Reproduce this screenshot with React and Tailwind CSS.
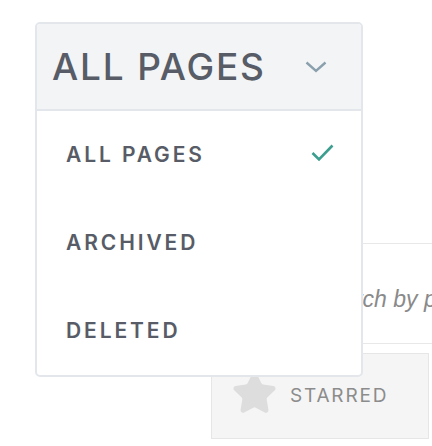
import { Star } from "lucide-react";

const items = [
  { label: "ALL PAGES", active: true },
  { label: "ARCHIVED" },
  { label: "DELETED" },
];

function Chevron() {
  return (
    <svg width="22" height="12" viewBox="0 0 22 12" fill="none">
      <path d="M1.5 1.5 L11 10 L20.5 1.5" stroke="#8aa0ad" strokeWidth="2.4" />
    </svg>
  );
}

function Check() {
  return (
    <svg width="23" height="18" viewBox="0 0 23 18" fill="none" className="-mt-[4px]">
      <path d="M1.5 9 L8 15.5 L21.5 1.5" stroke="#3c9e8f" strokeWidth="2.6" />
    </svg>
  );
}

export default function App() {
  return (
    <div className="relative w-[432px] h-[446px] overflow-hidden bg-white font-['Inter',sans-serif]">
      {/* page behind the menu */}
      <div className="pt-[243px]">
        <div className="ml-[211px] h-[101px] border-y border-[#e8e8e8] flex items-center pl-[103px] pt-[12px] whitespace-nowrap">
          <span className="italic text-[23px] text-[#8a8a8a] font-['Liberation_Sans',Arial,sans-serif]">Search by page title</span>
        </div>
        <div className="ml-[211px] mt-[9px] w-[218px] h-[86px] bg-[#f5f5f5] border border-[#e6e6e6] flex items-center pl-[19px] gap-[12px]">
          <Star size={47} fill="#dddddd" stroke="#dddddd" strokeWidth={1.5} className="-mt-[6px]" />
          <span className="text-[19px] tracking-[1.8px] text-[#8c8c8c]">STARRED</span>
        </div>
      </div>

      {/* dropdown menu */}
      <div className="absolute left-[35px] top-[22px] w-[328px] bg-white border-2 border-[#e3e7eb] rounded-[5px] overflow-hidden">
        <div className="h-[87px] bg-[#f3f4f6] border-b-2 border-[#e3e7eb] flex items-center justify-between pl-[15px] pr-[34px]">
          <span className="text-[37px] tracking-[1.8px] text-[#575c66] font-medium leading-none">ALL PAGES</span>
          <Chevron />
        </div>
        {items.map((it) => (
          <div key={it.label} className="h-[88px] flex items-center justify-between pl-[29px] pr-[27px]">
            <span className="text-[21px] tracking-[2.9px] text-[#575c66] font-semibold">{it.label}</span>
            {it.active && <Check />}
          </div>
        ))}
      </div>
    </div>
  );
}
